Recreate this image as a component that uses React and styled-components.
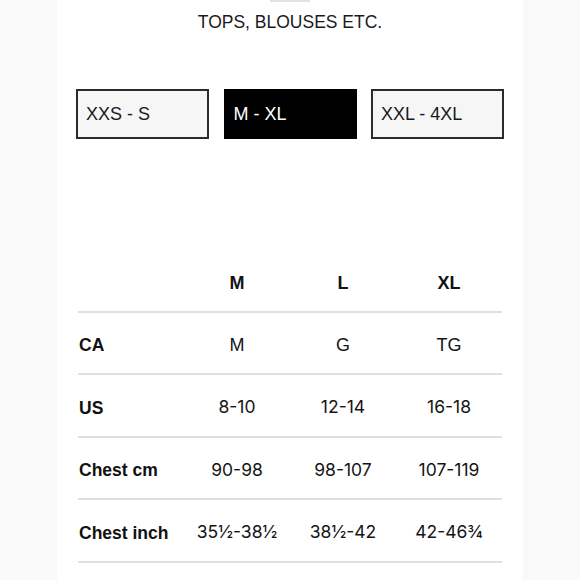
import React from "react";
import styled, { createGlobalStyle } from "styled-components";

const Global = createGlobalStyle`
  html, body { margin: 0; padding: 0; background: #f9f9f9; }
  body { font-family: "Liberation Sans", Arial, sans-serif; color: #111; }
`;

const Page = styled.div`
  width: 580px;
  height: 580px;
  overflow: hidden;
  display: flex;
  justify-content: center;
  background: #f9f9f9;
`;

const Panel = styled.div`
  width: 466px;
  box-sizing: border-box;
  padding: 0 21px;
  background: #fff;
  display: flex;
  flex-direction: column;
`;

const Nub = styled.div`
  align-self: center;
  width: 40px;
  height: 2px;
  background: #e2e2e2;
`;

const Title = styled.h1`
  margin: 9px 0 0;
  font-size: 17.5px;
  line-height: 22px;
  font-weight: 400;
  text-align: center;
  color: #1a1a1a;
`;

const Tabs = styled.div`
  margin: 56px -2px 0;
  display: grid;
  grid-template-columns: repeat(3, 1fr);
  column-gap: 14.5px;
`;

const Tab = styled.button`
  height: 50px;
  box-sizing: border-box;
  border: 2px solid ${(p) => (p.$active ? "#000" : "#2b2b2b")};
  background: ${(p) => (p.$active ? "#000" : "#f6f6f6")};
  color: ${(p) => (p.$active ? "#fff" : "#1a1a1a")};
  font-family: "Liberation Sans", Arial, sans-serif;
  font-size: 18px;
  text-align: left;
  padding: 0 0 0 8px;
  cursor: pointer;
`;

const Table = styled.div`
  margin-top: 111px;
  display: flex;
  flex-direction: column;
`;

const Row = styled.div`
  display: grid;
  grid-template-columns: repeat(4, 1fr);
  align-items: center;
  height: 62.5px;
  box-sizing: border-box;
  border-bottom: 2px solid #e0e0e0;
  padding-top: 6px;
`;

const Label = styled.div`
  font-size: 17.5px;
  font-weight: 700;
  padding-left: 1px;
`;

const Head = styled.div`
  font-size: 18px;
  font-weight: 700;
  text-align: center;
`;

const Cell = styled.div`
  font-family: ${(p) => (p.$num ? `Inter, "Liberation Sans", sans-serif` : `"Liberation Sans", Arial, sans-serif`)};
  font-size: ${(p) => (p.$num ? "17.5px" : "18px")};
  margin-top: ${(p) => (p.$num ? "-3px" : "0")};
  text-align: center;
  color: #151515;
`;

const rows = [
  { label: "CA", values: ["M", "G", "TG"] },
  { label: "US", values: ["8-10", "12-14", "16-18"], num: true },
  { label: "Chest cm", values: ["90-98", "98-107", "107-119"], num: true },
  { label: "Chest inch", values: ["35½-38½", "38½-42", "42-46¾"], num: true },
];

export default function App() {
  return (
    <>
      <Global />
      <Page>
        <Panel>
          <Nub />
          <Title>TOPS, BLOUSES ETC.</Title>
          <Tabs>
            <Tab>XXS - S</Tab>
            <Tab $active>M - XL</Tab>
            <Tab>XXL - 4XL</Tab>
          </Tabs>
          <Table>
            <Row>
              <div />
              <Head>M</Head>
              <Head>L</Head>
              <Head>XL</Head>
            </Row>
            {rows.map((r) => (
              <Row key={r.label}>
                <Label>{r.label}</Label>
                {r.values.map((v) => (
                  <Cell key={v} $num={r.num}>{v}</Cell>
                ))}
              </Row>
            ))}
          </Table>
        </Panel>
      </Page>
    </>
  );
}
